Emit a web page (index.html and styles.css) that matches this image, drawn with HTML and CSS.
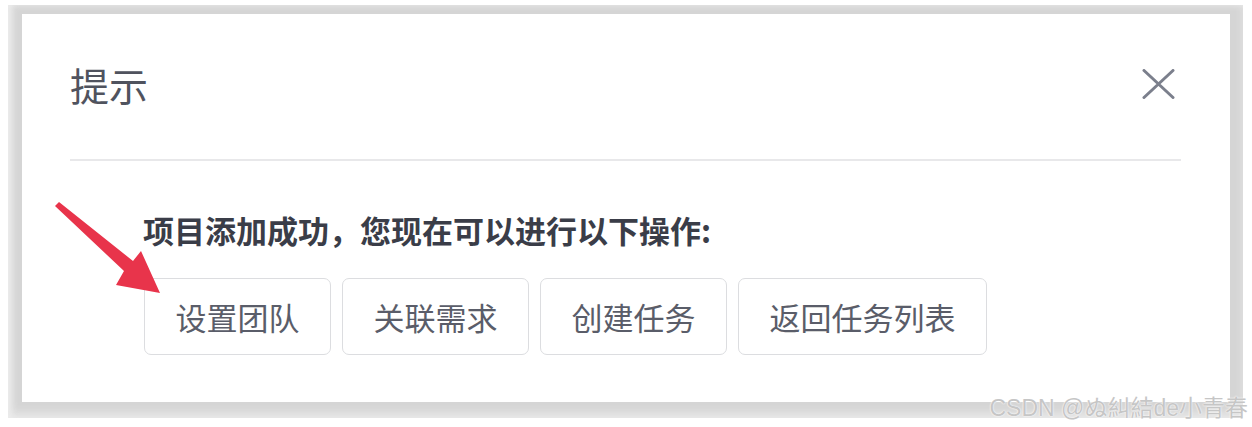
FILE: index.html
```html
<!DOCTYPE html>
<html lang="zh-CN">
<head>
<meta charset="utf-8">
<title>提示</title>
<link rel="stylesheet" href="styles.css">
</head>
<body>
<div class="page">
  <div class="frame">
    <div class="dialog">
      <div class="header">
        <div class="title">提示</div>
        <button class="close" aria-label="关闭">
          <svg width="33" height="30" viewBox="0 0 33 30"><path d="M2 1.5 L31 28.5 M31 1.5 L2 28.5" stroke="#7b7f8c" stroke-width="3" stroke-linecap="round" fill="none"/></svg>
        </button>
      </div>
      <div class="body">
        <p class="message">项目添加成功，您现在可以进行以下操作:</p>
        <div class="actions">
          <button class="btn">设置团队</button>
          <button class="btn">关联需求</button>
          <button class="btn">创建任务</button>
          <button class="btn">返回任务列表</button>
        </div>
      </div>
    </div>
  </div>
  <svg class="arrow" width="1252" height="427" viewBox="0 0 1252 427"><path d="M55 206 L59 202 L133 261 L141 251 L160 293 L116 285 L124 271 Z" fill="#e8344b"/></svg>
  <div class="watermark">CSDN @ぬ糾結de小青春</div>
</div>
</body>
</html>
```
FILE: styles.css
```css
html, body {
  margin: 0;
  padding: 0;
  background: #ffffff;
}
.page {
  position: relative;
  width: 1252px;
  height: 427px;
  overflow: hidden;
  font-family: "Noto Sans CJK SC", "Noto Sans", sans-serif;
}
.frame {
  margin: 5px 9px 0 8px;
  padding: 9px 13px 16px 14px;
  background: #d5d5d5;
  box-shadow: inset 4px 0 6px #ececec, inset 0 -6px 8px #e4e4e4;
}
.dialog {
  background: #ffffff;
  height: 388px;
  padding: 0 49px 0 48px;
  box-sizing: border-box;
}
.header {
  display: flex;
  align-items: center;
  justify-content: space-between;
  padding-top: 50px;
  padding-bottom: 55px;
  border-bottom: 2px solid #e8e8ea;
}
.title {
  font-size: 39px;
  line-height: 40px;
  color: #50535e;
  font-weight: 400;
}
.close {
  border: 0;
  background: none;
  padding: 0;
  margin-right: 6px;
  display: flex;
}
.body {
  padding-left: 73px;
  padding-top: 53px;
}
.message {
  margin: 0;
  font-size: 31px;
  line-height: 31px;
  font-weight: 700;
  color: #3a3d48;
}
.actions {
  display: flex;
  gap: 11px;
  margin-top: 33px;
  margin-left: 1px;
}
.btn {
  height: 77px;
  padding: 0 30.5px;
  border: 1.5px solid #dcdde0;
  border-radius: 7px;
  background: #ffffff;
  font-family: "Noto Sans CJK SC", "Noto Sans", sans-serif;
  font-size: 31px;
  color: #5a5d69;
}
.arrow {
  position: absolute;
  left: 0;
  top: 0;
  pointer-events: none;
}
.watermark {
  position: absolute;
  right: 4px;
  bottom: 6px;
  font-family: "Liberation Sans", "Noto Sans CJK JP", sans-serif;
  font-size: 23px;
  line-height: 26px;
  color: #c6c6c6;
  text-shadow: 0 0 2px #ffffff, 0 0 1px #ffffff;
}
```
